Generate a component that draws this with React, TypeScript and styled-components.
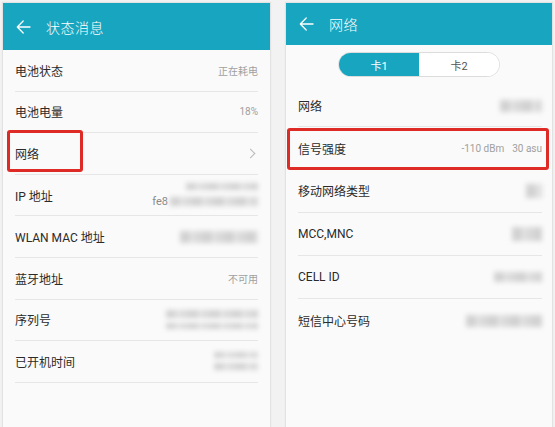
import styled, { createGlobalStyle } from "styled-components";

const teal = "#17a5c0";

const GlobalStyle = createGlobalStyle`
  html, body {
    margin: 0;
    padding: 0;
    background: #f2f2f2;
    overflow: hidden;
  }
  body {
    font-family: Roboto, "Noto Sans CJK SC", sans-serif;
  }
`;

const Page = styled.div`
  display: flex;
  gap: 16px;
  padding: 3px 3px 0 3px;
  width: 555px;
  height: 427px;
  box-sizing: border-box;
`;

const Phone = styled.div<{ $width: number }>`
  width: ${(p) => p.$width}px;
  height: 424px;
  background: #fafafa;
  box-shadow: 0 0 1px 1px #e2e2e2;
  display: flex;
  flex-direction: column;
  overflow: hidden;
`;

const Header = styled.div<{ $height: number }>`
  height: ${(p) => p.$height}px;
  background: ${teal};
  display: flex;
  align-items: center;
  padding-left: 13px;
  gap: 15px;
  color: #fff;
  flex-shrink: 0;
`;

const Title = styled.span`
  font-size: 14px;
  letter-spacing: 0.5px;
  font-weight: 300;
`;

const Segment = styled.div`
  display: flex;
  align-self: center;
  width: 162px;
  height: 25px;
  margin: 7px 0 8px;
  border: 1px solid #dcdcdc;
  border-radius: 13px;
  overflow: hidden;
  box-sizing: border-box;
  background: #fff;
`;

const SegItem = styled.div<{ $active?: boolean }>`
  flex: 1;
  display: flex;
  align-items: center;
  justify-content: center;
  font-size: 11px;
  background: ${(p) => (p.$active ? teal : "#fff")};
  color: ${(p) => (p.$active ? "#fff" : "#555")};
`;

const List = styled.div<{ $pad: number }>`
  display: flex;
  flex-direction: column;
  padding: 0 ${(p) => p.$pad}px 0 12px;
`;

const Row = styled.div<{ $height: number; $noLine?: boolean }>`
  position: relative;
  height: ${(p) => p.$height}px;
  display: flex;
  align-items: center;
  justify-content: space-between;
  border-bottom: ${(p) => (p.$noLine ? "none" : "1px solid #e6e6e6")};
  box-sizing: border-box;
`;

const Label = styled.span`
  font-size: 12px;
  color: #2a2a2a;
`;

const Value = styled.span`
  font-size: 10px;
  color: #a0a0a0;
  display: flex;
  align-items: center;
  gap: 8px;
`;

const Stack = styled.div`
  display: flex;
  flex-direction: column;
  align-items: flex-end;
  gap: 5px;
`;

const Line = styled.div`
  display: flex;
  align-items: center;
  gap: 2px;
  font-size: 11px;
  color: #8a8a8a;
`;

const Blur = styled.span<{ $w: number; $h?: number }>`
  display: inline-block;
  width: ${(p) => p.$w}px;
  height: ${(p) => p.$h ?? 9}px;
  background: repeating-linear-gradient(
    90deg,
    #d2d2d2 0 10px,
    #e4e4e4 10px 14px,
    #d9d9d9 14px 22px
  );
  filter: blur(2.4px);
`;

const Chevron = styled.span`
  width: 6px;
  height: 6px;
  border-top: 1px solid #b8b8b8;
  border-right: 1px solid #b8b8b8;
  transform: rotate(45deg);
  margin-right: 4px;
`;

const Highlight = styled.div<{
  $top: number;
  $left: number;
  $width: number;
  $height: number;
}>`
  position: absolute;
  top: ${(p) => p.$top}px;
  left: ${(p) => p.$left}px;
  width: ${(p) => p.$width}px;
  height: ${(p) => p.$height}px;
  border: 3px solid #de2b25;
  border-radius: 3px;
  box-sizing: border-box;
  pointer-events: none;
`;

const BackArrow = () => (
  <svg width="15" height="14" viewBox="0 0 15 14" fill="none">
    <path
      d="M14 7H1.5M7.2 1L1.3 7l5.9 6"
      stroke="#fff"
      strokeWidth="1.3"
      strokeLinecap="round"
      strokeLinejoin="round"
    />
  </svg>
);

export default function App() {
  return (
    <>
      <GlobalStyle />
      <Page>
        <Phone $width={267}>
          <Header $height={47}>
            <BackArrow />
            <Title>状态消息</Title>
          </Header>
          <List $pad={12}>
            <Row $height={41.6}>
              <Label>电池状态</Label>
              <Value>正在耗电</Value>
            </Row>
            <Row $height={41.6}>
              <Label>电池电量</Label>
              <Value>18%</Value>
            </Row>
            <Row $height={41.6}>
              <Label>网络</Label>
              <Chevron />
              <Highlight $top={-3} $left={-8} $width={76} $height={42} />
            </Row>
            <Row $height={41.6}>
              <Label>IP 地址</Label>
              <Stack>
                <Line>
                  <Blur $w={72} $h={7} />
                </Line>
                <Line>
                  fe8
                  <Blur $w={88} />
                </Line>
              </Stack>
            </Row>
            <Row $height={41.6}>
              <Label>WLAN MAC 地址</Label>
              <Blur $w={78} $h={12} />
            </Row>
            <Row $height={41.6}>
              <Label>蓝牙地址</Label>
              <Value>不可用</Value>
            </Row>
            <Row $height={41.6}>
              <Label>序列号</Label>
              <Stack>
                <Blur $w={92} $h={8} />
                <Blur $w={92} $h={6} />
              </Stack>
            </Row>
            <Row $height={41.6}>
              <Label>已开机时间</Label>
              <Stack>
                <Blur $w={44} $h={6} />
                <Blur $w={44} $h={7} />
              </Stack>
            </Row>
          </List>
        </Phone>

        <Phone $width={266}>
          <Header $height={42}>
            <BackArrow />
            <Title>网络</Title>
          </Header>
          <Segment>
            <SegItem $active>卡1</SegItem>
            <SegItem>卡2</SegItem>
          </Segment>
          <List $pad={10}>
            <Row $height={42}>
              <Label>网络</Label>
              <Blur $w={42} $h={12} />
            </Row>
            <Row $height={43}>
              <Label>信号强度</Label>
              <Value>
                <span>-110 dBm</span>
                <span>30 asu</span>
              </Value>
              <Highlight $top={1} $left={-11} $width={262} $height={42} />
            </Row>
            <Row $height={42.5}>
              <Label>移动网络类型</Label>
              <Blur $w={16} $h={14} />
            </Row>
            <Row $height={43.5}>
              <Label>MCC,MNC</Label>
              <Blur $w={30} $h={14} />
            </Row>
            <Row $height={43}>
              <Label>CELL ID</Label>
              <Blur $w={48} $h={10} />
            </Row>
            <Row $height={43} $noLine>
              <Label>短信中心号码</Label>
              <Blur $w={76} $h={12} />
            </Row>
          </List>
        </Phone>
      </Page>
    </>
  );
}
